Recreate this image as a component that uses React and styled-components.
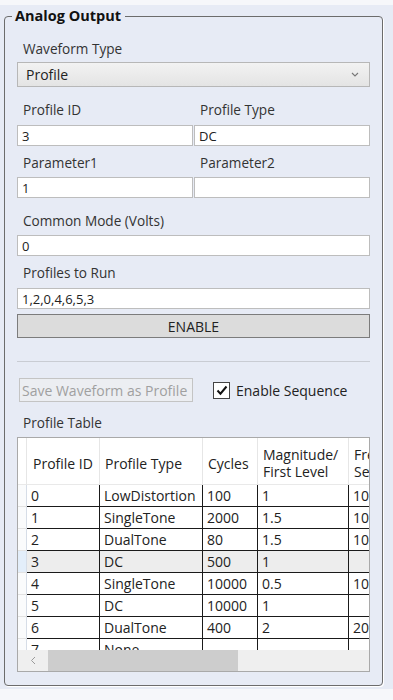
import styled, { createGlobalStyle } from "styled-components";

const GlobalStyle = createGlobalStyle`
  html, body {
    margin: 0;
    padding: 0;
    background: #f6f7fa;
  }
  body {
    font-family: "Open Sans", "Noto Sans", sans-serif;
    color: #333;
  }
`;

const Page = styled.div`
  width: 393px;
  height: 684px;
  margin-top: 5px;
  padding-top: 1px;
  box-sizing: border-box;
  background: #e7ebf5;
`;

const Group = styled.fieldset`
  margin: 0 10px 0 4px;
  padding: 13px 12px 13px 12px;
  border: 1px solid #6c6c6c;
  border-radius: 4px;
  box-shadow: 1px 1px 0 #ffffff;
  min-width: 0;
`;

const Legend = styled.legend`
  margin-left: -5px;
  padding: 0 4px 0 3px;
  font-size: 14.5px;
  font-weight: 700;
  line-height: 20px;
  color: #111;
`;

const Label = styled.div`
  height: 20px;
  line-height: 20px;
  font-size: 13.6px;
  padding-left: 6px;
  margin-top: ${(p) => p.gap || 0}px;
  white-space: nowrap;
`;

const Select = styled.div`
  margin-top: 3px;
  height: 25px;
  box-sizing: border-box;
  border: 1px solid #b7b7b7;
  background: linear-gradient(#f2f2f2, #e4e4e4);
  display: flex;
  align-items: center;
  justify-content: space-between;
  padding: 0 10px 0 8px;
  font-size: 14px;
  color: #222;
`;

const Pair = styled.div`
  display: grid;
  grid-template-columns: 176px 176px;
  column-gap: 1px;
  margin-top: ${(p) => p.gap || 0}px;
`;

const PairLabel = styled(Label)`
  padding-left: ${(p) => p.indent || 6}px;
`;

const Input = styled.input`
  display: block;
  width: 100%;
  height: ${(p) => p.h || 21}px;
  box-sizing: border-box;
  margin: ${(p) => p.gap || 0}px 0 0 0;
  border: 1px solid #bdbdbd;
  background: #fff;
  padding: 0 4px;
  font-family: inherit;
  font-size: 13px;
  color: #222;
  outline: none;
`;

const Button = styled.button`
  display: block;
  width: 100%;
  height: 24px;
  margin-top: 5px;
  border: 1px solid #7c7c7c;
  background: #dcdcdc;
  font-family: inherit;
  font-size: 14px;
  color: #222;
  padding: 0;
`;

const Separator = styled.hr`
  margin: 23px 0 0 0;
  border: none;
  border-top: 1px solid #c9ccd3;
  height: 0;
`;

const ActionRow = styled.div`
  display: flex;
  align-items: center;
  margin-top: 16px;
  height: 24px;
`;

const GhostButton = styled.button`
  width: 174px;
  height: 24px;
  margin-left: 2px;
  border: 1px solid #c4c4c4;
  background: #eceef2;
  color: #a0a0a0;
  font-family: inherit;
  font-size: 14px;
  padding: 0 0 0 2px;
  text-align: left;
  white-space: nowrap;
  overflow: hidden;
`;

const Check = styled.label`
  display: flex;
  align-items: center;
  gap: 6px;
  margin-left: 20px;
  font-size: 14px;
  color: #222;
`;

const Box = styled.span`
  width: 17px;
  height: 17px;
  box-sizing: border-box;
  border: 1px solid #444;
  background: #fff;
  display: flex;
  align-items: center;
  justify-content: center;
`;

const TableFrame = styled.div`
  margin-top: 4px;
  width: 353px;
  height: 235px;
  box-sizing: border-box;
  border: 1px solid #a9a9a9;
  background: #fff;
  display: flex;
  flex-direction: column;
`;

const Viewport = styled.div`
  flex: 1;
  overflow: hidden;
`;

const Grid = styled.table`
  table-layout: fixed;
  width: 421px;
  border-collapse: separate;
  border-spacing: 0;
  font-size: 14px;
  color: #222;
`;

const HeadCell = styled.th`
  height: 47px;
  box-sizing: border-box;
  padding: 4px 0 0 ${(p) => p.pad ?? 5}px;
  font-weight: 400;
  text-align: left;
  line-height: 17px;
  background: #fff;
  border-right: 1px solid #e6e6e6;
  border-bottom: 1px solid #e9e9e9;
  white-space: nowrap;
  overflow: hidden;
`;

const RowHead = styled.td`
  height: 22px;
  padding: 0;
  box-sizing: border-box;
  background: ${(p) => (p.current ? "#e3eefa" : "#fafbfc")};
  border-right: 1px solid #d6dde7;
  border-bottom: 1px solid #e2e2e2;
`;

const Cell = styled.td`
  height: 22px;
  box-sizing: border-box;
  padding: 0 0 0 4px;
  background: ${(p) => (p.current ? "#ededed" : "#fff")};
  border-right: 1px solid #1a1a1a;
  border-bottom: 1px solid #1a1a1a;
  white-space: nowrap;
  overflow: hidden;
`;

const ScrollBar = styled.div`
  height: 21px;
  flex: none;
  background: #efefef;
  display: flex;
  align-items: center;
`;

const ArrowZone = styled.div`
  width: 30px;
  height: 100%;
  display: flex;
  align-items: center;
  justify-content: center;
`;

const Thumb = styled.div`
  width: 190px;
  height: 100%;
  background: #cdcdcd;
`;

const columns = [
  { w: 9 },
  { w: 73, title: "Profile ID" },
  { w: 103, title: "Profile Type" },
  { w: 55, title: "Cycles" },
  { w: 91, title: ["Magnitude/", "First Level"] },
  { w: 90, title: ["Frequency/", "Second Level"] },
];

const rows = [
  ["0", "LowDistortion", "100", "1", "1000"],
  ["1", "SingleTone", "2000", "1.5", "1000"],
  ["2", "DualTone", "80", "1.5", "1000"],
  ["3", "DC", "500", "1", ""],
  ["4", "SingleTone", "10000", "0.5", "1000"],
  ["5", "DC", "10000", "1", ""],
  ["6", "DualTone", "400", "2", "2000"],
  ["7", "None", "", "", ""],
];

const Chevron = () => (
  <svg width="8" height="5" viewBox="0 0 8 5">
    <path d="M1 1l3 3 3-3" fill="none" stroke="#777" strokeWidth="1.1" />
  </svg>
);

export default function App() {
  return (
    <>
      <GlobalStyle />
      <Page>
        <Group>
          <Legend>Analog Output</Legend>

          <Label>Waveform Type</Label>
          <Select>
            <span>Profile</span>
            <Chevron />
          </Select>

          <Pair gap={13}>
            <PairLabel>Profile ID</PairLabel>
            <PairLabel indent={6}>Profile Type</PairLabel>
          </Pair>
          <Pair gap={5}>
            <Input readOnly value="3" />
            <Input readOnly value="DC" />
          </Pair>

          <Pair gap={7}>
            <PairLabel>Parameter1</PairLabel>
            <PairLabel indent={6}>Parameter2</PairLabel>
          </Pair>
          <Pair gap={4}>
            <Input readOnly value="1" />
            <Input readOnly value="" />
          </Pair>

          <Label gap={13}>Common Mode (Volts)</Label>
          <Input readOnly value="0" gap={4} />

          <Label gap={7}>Profiles to Run</Label>
          <Input readOnly value="1,2,0,4,6,5,3" gap={5} h={21} />
          <Button>ENABLE</Button>

          <Separator />

          <ActionRow>
            <GhostButton disabled>Save Waveform as Profile</GhostButton>
            <Check>
              <Box>
                <svg width="12" height="11" viewBox="0 0 12 11">
                  <path d="M1.5 5.5l3 3.2L10.5 1.5" fill="none" stroke="#111" strokeWidth="2" />
                </svg>
              </Box>
              Enable Sequence
            </Check>
          </ActionRow>

          <Label gap={11}>Profile Table</Label>
          <TableFrame>
            <Viewport>
              <Grid>
                <colgroup>
                  {columns.map((c, i) => (
                    <col key={i} style={{ width: c.w }} />
                  ))}
                </colgroup>
                <thead>
                  <tr>
                    {columns.map((c, i) => (
                      <HeadCell key={i} pad={i === 0 ? 0 : i === 1 ? 6 : 5}>
                        {Array.isArray(c.title)
                          ? c.title.map((t) => <div key={t}>{t}</div>)
                          : c.title}
                      </HeadCell>
                    ))}
                  </tr>
                </thead>
                <tbody>
                  {rows.map((r, ri) => (
                    <tr key={ri}>
                      <RowHead current={ri === 3} />
                      {r.map((v, ci) => (
                        <Cell key={ci} current={ri === 3}>
                          {v}
                        </Cell>
                      ))}
                    </tr>
                  ))}
                </tbody>
              </Grid>
            </Viewport>
            <ScrollBar>
              <ArrowZone>
                <svg width="6" height="9" viewBox="0 0 6 9">
                  <path d="M5 1L1.5 4.5 5 8" fill="none" stroke="#9a9a9a" strokeWidth="1" />
                </svg>
              </ArrowZone>
              <Thumb />
            </ScrollBar>
          </TableFrame>
        </Group>
      </Page>
    </>
  );
}
